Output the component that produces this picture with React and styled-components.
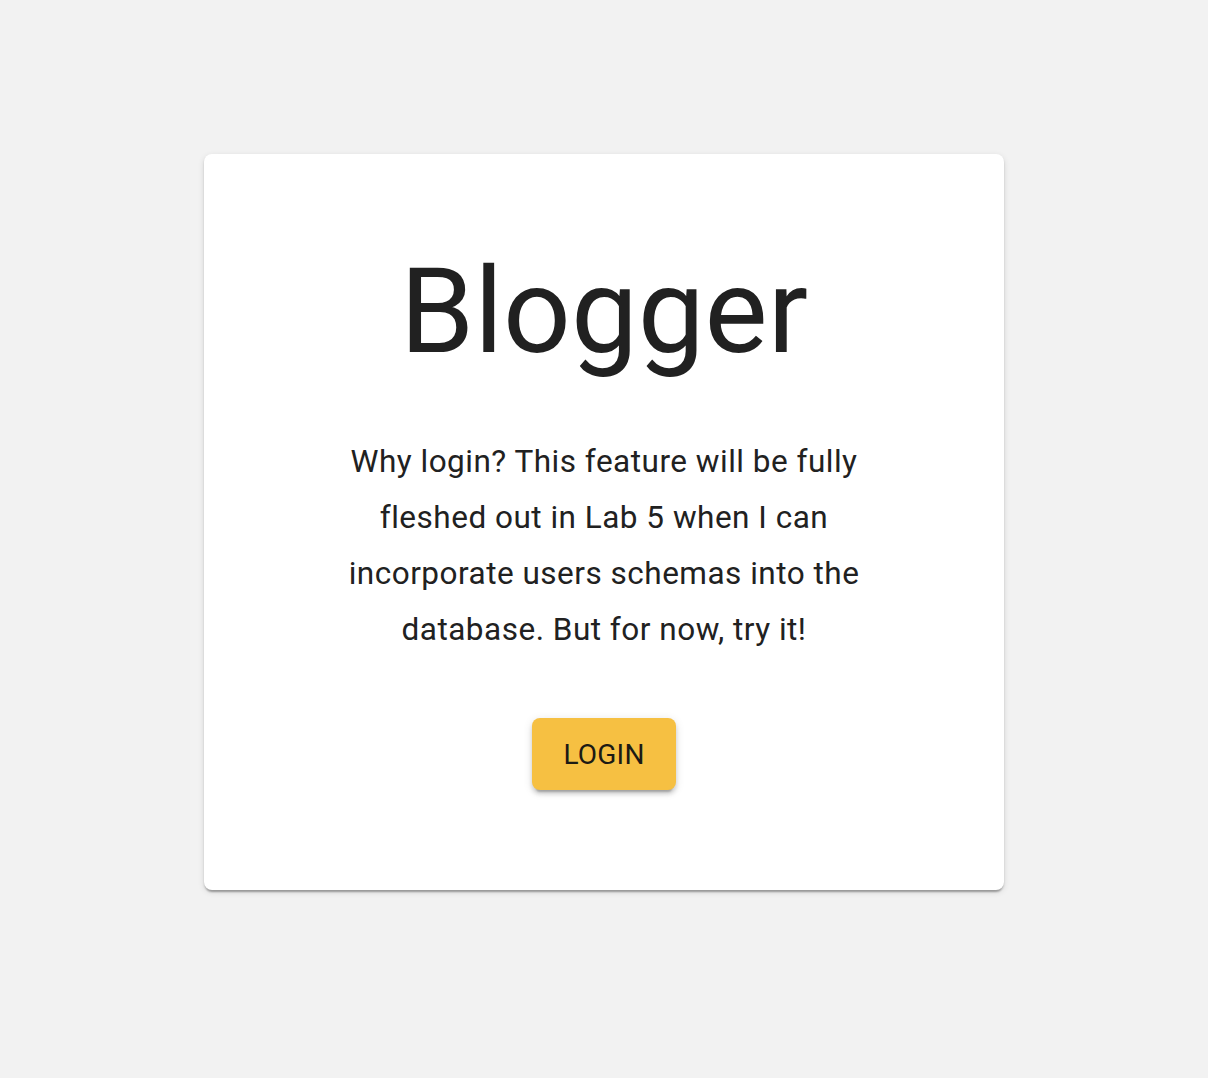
import React from "react";
import styled, { createGlobalStyle } from "styled-components";

const GlobalStyle = createGlobalStyle`
  html, body {
    margin: 0;
    padding: 0;
    background: #f2f2f2;
    font-family: Roboto, "Liberation Sans", Arial, sans-serif;
  }
`;

const Page = styled.div`
  min-height: 1078px;
  display: flex;
  justify-content: center;
  align-items: flex-start;
  padding-top: 154px;
  box-sizing: border-box;
`;

const Card = styled.div`
  width: 800px;
  box-sizing: border-box;
  background: #ffffff;
  border-radius: 8px;
  padding: 86px 130px 100px;
  display: flex;
  flex-direction: column;
  align-items: center;
  box-shadow: 0 4px 2px -2px rgba(0, 0, 0, 0.2), 0 2px 2px 0 rgba(0, 0, 0, 0.14),
    0 2px 6px 0 rgba(0, 0, 0, 0.12);
`;

const Title = styled.h1`
  margin: 0;
  font-size: 119px;
  font-weight: 400;
  line-height: 144px;
  color: #212121;
`;

const Blurb = styled.p`
  margin: 50px 0 0;
  font-size: 31.5px;
  letter-spacing: 0.5px;
  line-height: 56px;
  text-align: center;
  color: #212121;
`;

const LoginButton = styled.button`
  margin-top: 60px;
  width: 144px;
  height: 72px;
  padding: 0;
  border: none;
  border-radius: 8px;
  background: #f6c042;
  color: #1c1a14;
  font-family: Roboto, "Liberation Sans", Arial, sans-serif;
  font-size: 28px;
  font-weight: 400;
  letter-spacing: 0.2px;
  text-transform: uppercase;
  cursor: pointer;
  box-shadow: 0 6px 2px -4px rgba(0, 0, 0, 0.2), 0 4px 4px 0 rgba(0, 0, 0, 0.14),
    0 2px 10px 0 rgba(0, 0, 0, 0.12);
`;

const App = () => {
  return (
    <>
      <GlobalStyle />
      <Page>
        <Card>
          <Title>Blogger</Title>
          <Blurb>
            Why login? This feature will be fully fleshed out in Lab 5 when I
            can incorporate users schemas into the database. But for now, try
            it!
          </Blurb>
          <LoginButton>Login</LoginButton>
        </Card>
      </Page>
    </>
  );
};

export default App;
